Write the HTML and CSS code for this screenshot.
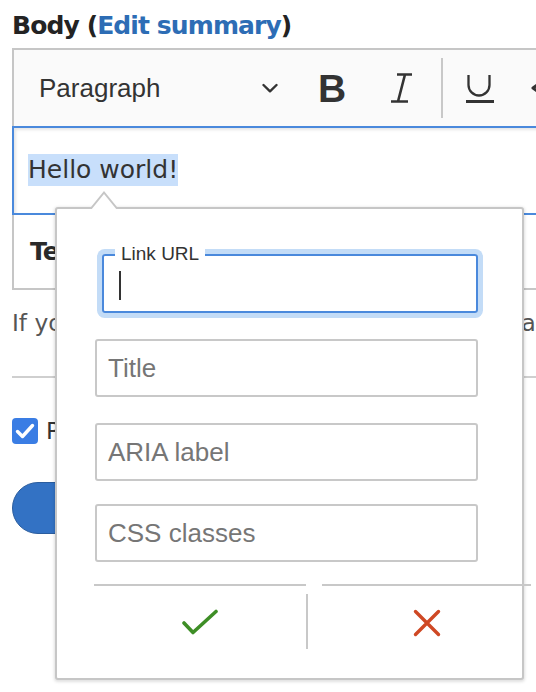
FILE: index.html
```html
<!DOCTYPE html>
<html lang="en">
<head>
<meta charset="utf-8">
<title>Body editor</title>
<link rel="stylesheet" href="styles.css">
</head>
<body>
<div class="page">
  <h2 class="field-label">Body (<a href="#">Edit summary</a>)</h2>
  <div class="editor">
    <div class="toolbar">
      <div class="dropdown">
        <span>Paragraph</span>
        <svg class="chev" width="16" height="10" viewBox="0 0 16 10"><path d="M1.5 2 L8 8.3 L14.5 2" fill="none" stroke="#333" stroke-width="2.4" stroke-linecap="round" stroke-linejoin="round"/></svg>
      </div>
      <span class="tb-bold">B</span>
      <svg class="tb-italic" width="24" height="32" viewBox="0 0 24 32"><path d="M7 2.5 H22 M15 2.5 L8 29.5 M1 29.5 H18" fill="none" stroke="#333" stroke-width="2.6"/></svg>
      <span class="tb-sep"></span>
      <svg class="tb-under" width="30" height="32" viewBox="0 0 30 32"><path d="M3.5 3 V13 A10.5 10.5 0 0 0 24.5 13 V3" fill="none" stroke="#333" stroke-width="2.3"/><path d="M1 29.5 H29" stroke="#333" stroke-width="3"/></svg>
      <svg class="tb-more" width="10" height="12" viewBox="0 0 10 12"><path d="M8.5 2 L3 6 L8.5 10" fill="none" stroke="#333" stroke-width="3" stroke-linejoin="round"/></svg>
    </div>
    <div class="editable"><span class="sel">Hello world!</span></div>
  </div>
  <div class="format"><span>Text format</span></div>
  <p class="help">If you switch the text format, the content stays the same.</p>
  <div class="rule"></div>
  <label class="check-row"><span class="checkbox"><svg width="26" height="26" viewBox="0 0 26 26"><path d="M5.5 13.5 L10.5 18.5 L20.5 7.5" fill="none" stroke="#fff" stroke-width="3.4" stroke-linecap="round" stroke-linejoin="round"/></svg></span><span>Published</span></label>
  <button class="save" type="button">Save</button>
</div>

<div class="balloon">
  <div class="lf focus">
    <span class="float-label">Link URL</span>
    <span class="caret"></span>
  </div>
  <div class="lf">Title</div>
  <div class="lf lf-aria">ARIA label</div>
  <div class="lf lf-last">CSS classes</div>
  <div class="actions">
    <div class="act act-ok">
      <svg width="38" height="28" viewBox="0 0 38 28"><path d="M3 14 L12 23.5 L35 2.5" fill="none" stroke="#3e8e26" stroke-width="3.6" stroke-linecap="round" stroke-linejoin="round"/></svg>
    </div>
    <span class="act-sep"></span>
    <div class="act act-cancel">
      <svg width="28" height="28" viewBox="0 0 28 28"><path d="M2.5 2.5 L25.5 25.5 M25.5 2.5 L2.5 25.5" fill="none" stroke="#cf4824" stroke-width="3.4" stroke-linecap="round"/></svg>
    </div>
  </div>
</div>
</body>
</html>
```

FILE: styles.css
```css
html, body {
  margin: 0;
  padding: 0;
  background: #fff;
  overflow: hidden;
}
body {
  position: relative;
  width: 536px;
  height: 692px;
  font-family: "DejaVu Sans", "Liberation Sans", sans-serif;
  color: #232323;
}
.page {
  width: 660px;
  padding: 11px 0 0 12px;
}
.field-label {
  margin: 0 0 7px;
  font-size: 25px;
  letter-spacing: -0.9px;
  line-height: 30px;
  font-weight: 700;
  color: #232323;
}
.field-label a {
  color: #2d6db5;
  text-decoration: none;
}
.toolbar {
  display: flex;
  align-items: center;
  height: 76px;
  border: 2px solid #c6c6c6;
  border-right: 0;
  border-bottom: 0;
  background: #fafafa;
  padding-left: 25px;
  font-family: "Liberation Sans", Arial, sans-serif;
  color: #333;
}
.dropdown {
  display: flex;
  align-items: center;
  width: 239px;
  font-size: 26px;
}
.chev {
  margin-left: auto;
}
.tb-bold {
  width: 30px;
  margin-left: 40px;
  font-size: 39px;
  font-weight: 700;
  line-height: 1;
  color: #333;
}
.tb-italic {
  margin-left: 42px;
}
.tb-sep {
  width: 2px;
  height: 60px;
  margin-left: 27px;
  background: #c8c8c8;
}
.tb-under {
  margin-left: 22px;
}
.tb-more {
  margin-left: 35px;
}
.editable {
  border: 2px solid #4a89dc;
  border-right: 0;
  padding: 26px 0 27px 14px;
  box-shadow: inset 2px 2px 3px rgba(0, 0, 0, 0.1);
}
.sel {
  display: inline-block;
  font-size: 25px;
  line-height: 32px;
  background: #c8dffb;
  color: #333;
}
.format {
  border-left: 2px solid #c6c6c6;
  border-bottom: 2px solid #c6c6c6;
  padding: 22px 0 21px 16px;
  font-size: 25px;
  letter-spacing: -0.9px;
  line-height: 30px;
  font-weight: 700;
  color: #2a2a2a;
}
.help {
  margin: 18px 0 0;
  font-size: 23.3px;
  line-height: 30px;
  color: #555;
  white-space: nowrap;
}
.rule {
  margin-top: 38px;
  height: 2px;
  background: #cfcfcf;
}
.check-row {
  display: flex;
  align-items: center;
  gap: 8px;
  margin-top: 38px;
  font-size: 23.3px;
  line-height: 30px;
  color: #333;
}
.checkbox {
  width: 26px;
  height: 26px;
  border-radius: 4px;
  background: #3a7de4;
  display: flex;
}
.save {
  display: block;
  margin-top: 36px;
  width: 200px;
  height: 52px;
  border-radius: 26px;
  background: #3372c4;
  border: 1px solid #2b5d9e;
  color: #fff;
  font-family: "DejaVu Sans", sans-serif;
  font-size: 22px;
}
.balloon {
  position: absolute;
  left: 55px;
  top: 207px;
  width: 469px;
  box-sizing: border-box;
  border: 2px solid #c6c6c6;
  border-radius: 3px;
  background: #fff;
  box-shadow: 0 1px 3px 1px rgba(0, 0, 0, 0.12);
  padding: 45px 44px 18px 38px;
  font-family: "Liberation Sans", Arial, sans-serif;
}
.balloon::before,
.balloon::after {
  content: "";
  position: absolute;
  left: 34px;
  width: 0;
  height: 0;
  border-left: 13.5px solid transparent;
  border-right: 13.5px solid transparent;
}
.balloon::before {
  top: -18px;
  border-bottom: 16px solid #c6c6c6;
}
.balloon::after {
  top: -15px;
  border-bottom: 16px solid #fff;
}
.lf {
  position: relative;
  box-sizing: border-box;
  height: 58px;
  border: 2px solid #c8c8c8;
  border-radius: 3px;
  margin-bottom: 26px;
  padding-left: 11px;
  display: flex;
  align-items: center;
  font-size: 26px;
  color: #767676;
}
.lf.focus {
  margin-left: 7px;
  height: 59px;
  border-color: #4a89dc;
  box-shadow: 0 0 0 5px #c3dcf7;
}
.lf-aria {
  margin-bottom: 23px;
}
.lf-last {
  margin-bottom: 22px;
}
.float-label {
  position: absolute;
  left: 11px;
  top: -13px;
  padding: 0 6px;
  background: #fff;
  font-size: 19px;
  line-height: 22px;
  color: #333;
}
.caret {
  position: absolute;
  left: 15px;
  top: 15px;
  width: 2px;
  height: 29px;
  background: #333;
}
.actions {
  display: flex;
  width: 437px;
  margin-left: -1px;
}
.act {
  height: 74px;
  border-top: 2px solid #c8c8c8;
  display: flex;
  align-items: center;
  justify-content: center;
}
.act-ok {
  width: 212px;
}
.act-sep {
  width: 2px;
  height: 55px;
  margin-top: 10px;
  margin-right: 14px;
  background: #c8c8c8;
}
.act-cancel {
  flex: 1;
}
```
